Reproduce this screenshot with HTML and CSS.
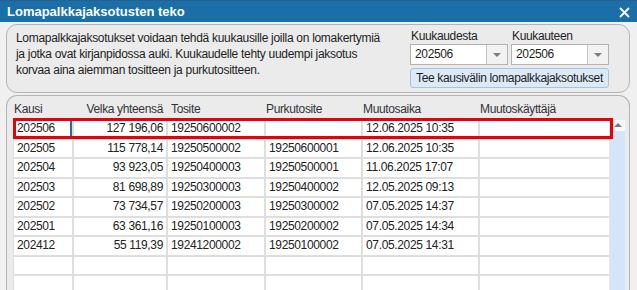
FILE: index.html
```html
<!DOCTYPE html>
<html>
    <head>
        <link rel="stylesheet" href="styles.css">
    </head>
    <body>
        <div class="titlebar">
            <span class="title">Lomapalkkajaksotusten teko</span>
            <svg class="close" width="11" height="11" viewBox="0 0 11 11">
                <path d="M1 1L10 10M10 1L1 10" stroke="#fff" stroke-width="1.8"/>
            </svg>
        </div>
        <div class="content">
            <div class="panel top">
                <p class="info">
                    Lomapalkkajaksotukset voidaan tehdä kuukausille joilla on lomakertymiä<br>
                    ja jotka ovat kirjanpidossa auki. Kuukaudelle tehty uudempi jaksotus<br>
                    korvaa aina aiemman tositteen ja purkutositteen.
                </p>
                <div class="range">
                    <div class="fields">
                        <div class="field">
                            <span class="lbl">Kuukaudesta</span>
                            <div class="select"><span class="val">202506</span><span class="arrow"></span></div>
                        </div>
                        <div class="field">
                            <span class="lbl">Kuukauteen</span>
                            <div class="select"><span class="val">202506</span><span class="arrow"></span></div>
                        </div>
                    </div>
                    <button type="button" class="make">Tee kausivälin lomapalkkajaksotukset</button>
                </div>
            </div>
            <div class="panel bottom">
                <div class="table">
                    <div class="head">
                        <span>Kausi</span>
                        <span class="num">Velka yhteensä</span>
                        <span>Tosite</span>
                        <span>Purkutosite</span>
                        <span>Muutosaika</span>
                        <span>Muutoskäyttäjä</span>
                    </div>
                    <div class="rows">
                        <span class="focus">202506</span><span class="num">127 196,06</span><span>19250600002</span><span></span><span>12.06.2025 10:35</span><span></span>
                        <span>202505</span><span class="num">115 778,14</span><span>19250500002</span><span>19250600001</span><span>12.06.2025 10:35</span><span></span>
                        <span>202504</span><span class="num">93 923,05</span><span>19250400003</span><span>19250500001</span><span>11.06.2025 17:07</span><span></span>
                        <span>202503</span><span class="num">81 698,89</span><span>19250300003</span><span>19250400002</span><span>12.05.2025 09:13</span><span></span>
                        <span>202502</span><span class="num">73 734,57</span><span>19250200003</span><span>19250300002</span><span>07.05.2025 14:37</span><span></span>
                        <span>202501</span><span class="num">63 361,16</span><span>19250100003</span><span>19250200002</span><span>07.05.2025 14:34</span><span></span>
                        <span>202412</span><span class="num">55 119,39</span><span>19241200002</span><span>19250100002</span><span>07.05.2025 14:31</span><span></span>
                        <span></span><span></span><span></span><span></span><span></span><span></span>
                        <span></span><span></span><span></span><span></span><span></span><span></span>
                    </div>
                    <div class="scroll">
                        <div class="up"></div>
                    </div>
                    <div class="marker"></div>
                </div>
            </div>
        </div>
    </body>
</html>
```
FILE: styles.css
```css
body{
    margin: 0;
    width: 637px;
    height: 290px;
    overflow: hidden;
    background-color: #f0f0f0;
    font-family: "Liberation Sans", Arial, sans-serif;
    font-size: 12px;
    letter-spacing: -0.35px;
    color: #1e1e1e;
}

.titlebar{
    height: 22px;
    background-color: #1b6fa9;
    border-top: 1px solid #2b5f8e;
    box-sizing: border-box;
    display: flex;
    align-items: center;
    justify-content: space-between;
    padding: 0 7px 0 7px;
}

.title{
    color: #fff;
    font-weight: bold;
    font-size: 13px;
    letter-spacing: 0;
}

.close{
    margin-top: 1px;
}

.content{
    padding: 2px 7px 0 6px;
    display: flex;
    flex-direction: column;
    gap: 2px;
}

.panel{
    background-color: #ebebeb;
    border: 1px solid #b4b4b4;
    border-radius: 11px;
}

.top{
    height: 67px;
    display: flex;
    justify-content: space-between;
    padding: 0 19px 0 9px;
}

.info{
    margin: 5px 0 0 0;
    line-height: 16px;
    letter-spacing: -0.3px;
    white-space: nowrap;
}

.range{
    width: 200px;
    padding-top: 4px;
}

.fields{
    display: flex;
    gap: 3px;
}

.field{
    display: flex;
    flex-direction: column;
}

.lbl{
    height: 15px;
    line-height: 15px;
    color: #222;
    padding-left: 1px;
}

.select{
    width: 96px;
    height: 19px;
    border: 1px solid #b2b2b2;
    background-color: #fff;
    display: flex;
    justify-content: space-between;
}

.val{
    line-height: 19px;
    padding-left: 4px;
}

.arrow{
    width: 20px;
    border-left: 1px solid #c4c4c4;
    background-color: #f2f2f2;
    position: relative;
}

.arrow::after{
    content: "";
    position: absolute;
    left: 6px;
    top: 8px;
    border-left: 4px solid transparent;
    border-right: 4px solid transparent;
    border-top: 4px solid #7c7c7c;
}

.make{
    margin-top: 3px;
    width: 199px;
    height: 20px;
    padding: 0;
    border: 1px solid #aac3dc;
    border-radius: 3px;
    background-color: #dceaf7;
    font-family: "Liberation Sans", Arial, sans-serif;
    font-size: 12px;
    letter-spacing: -0.35px;
    color: #1e1e1e;
}

.bottom{
    height: 240px;
    border-bottom: none;
    border-radius: 11px 11px 0 0;
    padding: 3px 4px 0 6px;
}

.table{
    position: relative;
    display: grid;
    grid-template-columns: 596px 16px;
}

.head{
    grid-column: 1 / 3;
    display: grid;
    grid-template-columns: 58px 92px 96px 95px 115px 130px;
    column-gap: 2px;
    height: 19px;
    padding-top: 1px;
    line-height: 19px;
    color: #333;
}

.head span{
    padding-left: 1px;
}

.head .num{
    text-align: right;
    padding-right: 2px;
}

.head span:nth-child(3){
    padding-left: 4px;
}

.rows{
    display: grid;
    grid-template-columns: 58px 92px 96px 95px 115px 130px;
    grid-auto-rows: 17.5px;
    gap: 2px;
    background-color: #dedede;
    padding: 0 0 0 1px;
    border-top: 1px solid #dedede;
}

.rows span{
    background-color: #fff;
    line-height: 17px;
    padding-left: 3px;
    color: #222;
}

.rows .num{
    text-align: right;
    padding-right: 3px;
}

.rows .focus{
    box-shadow: inset -2px -2px 0 #2a6aa8;
}

.scroll{
    background-color: #d3e6f7;
    border-left: 1px solid #e6e6e6;
    margin-top: 1px;
}

.up{
    height: 11px;
    background-color: #fafafa;
    position: relative;
}

.up::after{
    content: "";
    position: absolute;
    left: 4px;
    top: 3px;
    border-left: 4px solid transparent;
    border-right: 4px solid transparent;
    border-bottom: 4px solid #6f7c8a;
}

.marker{
    position: absolute;
    left: 0;
    top: 19px;
    width: 600px;
    height: 21px;
    border: 3px solid #e8000c;
    box-sizing: border-box;
}
```
